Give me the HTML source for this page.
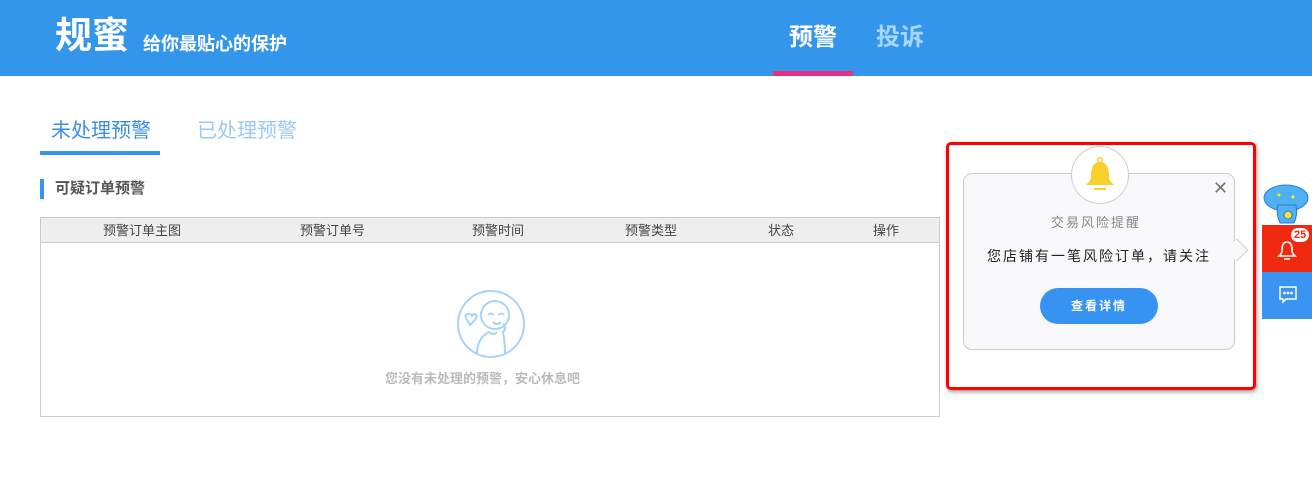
<!DOCTYPE html>
<html><head><meta charset="utf-8"><style>
*{margin:0;padding:0;box-sizing:border-box}
body{width:1312px;height:502px;background:#fff;font-family:"Liberation Sans","Noto Sans CJK SC",sans-serif;position:relative;overflow:hidden}
.hd{position:absolute;left:0;top:0;width:1312px;height:76px;background:#3396ea}
.abs{position:absolute;white-space:nowrap}
</style></head><body>
<div class="hd"></div>
<div class="abs" style="left:55px;top:11px;font-size:37px;color:#fff;font-weight:bold;line-height:50px">规蜜</div>
<div class="abs" style="left:143px;top:32px;font-size:18px;color:#fff;font-weight:bold;line-height:24px">给你最贴心的保护</div>
<div class="abs" style="left:789px;top:23px;font-size:24px;color:#fff;font-weight:bold;line-height:30px">预警</div>
<div class="abs" style="left:876px;top:23px;font-size:24px;color:#a8d6ff;font-weight:bold;line-height:30px">投诉</div>
<div class="abs" style="left:773px;top:71px;width:80px;height:5px;background:#ea2f7f"></div>

<div class="abs" style="left:51px;top:118px;font-size:20px;color:#3a8ee6;line-height:26px">未处理预警</div>
<div class="abs" style="left:197px;top:118px;font-size:20px;color:#9cc9f3;line-height:26px">已处理预警</div>
<div class="abs" style="left:40px;top:151px;width:120px;height:4px;background:#3396ea"></div>
<div class="abs" style="left:40px;top:179px;width:4px;height:20px;background:#3396ea"></div>
<div class="abs" style="left:55px;top:179px;font-size:15px;color:#555;font-weight:bold;line-height:20px">可疑订单预警</div>

<div class="abs" style="left:40px;top:217px;width:900px;height:200px;border:1px solid #ccc"></div>
<div class="abs" style="left:41px;top:218px;width:898px;height:25px;background:#eee;border-bottom:1px solid #ccc"></div>
<div class="abs" style="top:222px;font-size:13px;color:#444;line-height:17px;left:103px">预警订单主图</div>
<div class="abs" style="top:222px;font-size:13px;color:#444;line-height:17px;left:300px">预警订单号</div>
<div class="abs" style="top:222px;font-size:13px;color:#444;line-height:17px;left:472px">预警时间</div>
<div class="abs" style="top:222px;font-size:13px;color:#444;line-height:17px;left:625px">预警类型</div>
<div class="abs" style="top:222px;font-size:13px;color:#444;line-height:17px;left:768px">状态</div>
<div class="abs" style="top:222px;font-size:13px;color:#444;line-height:17px;left:873px">操作</div>
<svg class="abs" style="left:455px;top:288px" width="72" height="72" viewBox="0 0 72 72" fill="none" stroke="#a7d3fb" stroke-width="2">
<circle cx="36" cy="36" r="33"/>
<circle cx="40" cy="27" r="14"/>
<path d="M33 27q3-3 6 0M43 27q3-3 6 0M38 34q4 4 8 0"/>
<path d="M22 66q0-16 12-22 4 4 8 0M50 66q0-12 -2-22q4-4 0-8"/>
<path d="M12 32q-4-6 2-6 2 0 3 2 1-2 3-2 4 2-2 8l-3 3z"/>
</svg>
<div class="abs" style="left:385px;top:370px;font-size:13px;color:#bbb;font-weight:bold;line-height:18px">您没有未处理的预警，安心休息吧</div>

<div class="abs" style="left:946px;top:142px;width:310px;height:248px;border:3px solid #f00;border-radius:5px;box-shadow:1px 2px 4px rgba(0,0,0,.4)"></div>
<div class="abs" style="left:963px;top:173px;width:272px;height:177px;background:#f8f8fa;border:1px solid #ccc;border-radius:9px"></div>
<div class="abs" style="left:1229px;top:242px;width:16px;height:16px;background:#f8f8fa;border-right:1px solid #ccc;border-top:1px solid #ccc;transform:rotate(45deg)"></div>
<div class="abs" style="left:1071px;top:146px;width:58px;height:58px;border-radius:50%;background:#fff;border:1px solid #ccc"></div>
<svg class="abs" style="left:1084px;top:156px" width="32" height="38" viewBox="0 0 32 38"><circle cx="16" cy="4" r="2.5" fill="none" stroke="#f9cf2b" stroke-width="1.5"/><path d="M16 6c-7 0-9 6-9 14 0 4-2 6-5 9h28c-3-3-5-5-5-9 0-8-2-14-9-14z" fill="#f9cf2b"/><rect x="10" y="32" width="12" height="2" fill="#f9cf2b"/></svg>
<div class="abs" style="left:1213px;top:178px;font-size:18px;color:#777;line-height:20px">✕</div>
<div class="abs" style="left:1051px;top:214px;font-size:13px;color:#888;letter-spacing:2px;line-height:18px">交易风险提醒</div>
<div class="abs" style="left:987px;top:246px;font-size:14px;color:#222;letter-spacing:2px;line-height:20px">您店铺有一笔风险订单，请关注</div>
<div class="abs" style="left:1040px;top:288px;width:118px;height:36px;border-radius:18px;background:#3693f1;color:#fff;font-size:12px;font-weight:bold;text-align:center;line-height:36px;letter-spacing:2px">查看详情</div>

<svg class="abs" style="left:1262px;top:183px" width="50" height="43" viewBox="0 0 50 43"><ellipse cx="24" cy="15" rx="22" ry="13" fill="#4fb0f3" stroke="#2a7fd0"/><path d="M16 22q-2 10 2 18h14q4-8 2-18z" fill="#4fb0f3" stroke="#2a7fd0"/><circle cx="26" cy="32" r="4" fill="#f5e02a" stroke="#2a7fd0"/><circle cx="17" cy="12" r="1.5" fill="#ff0"/><circle cx="31" cy="14" r="1.5" fill="#ff0"/></svg>
<div class="abs" style="left:1262px;top:225px;width:50px;height:47px;background:#ef2a10"></div>
<svg class="abs" style="left:1277px;top:239px" width="20" height="22" viewBox="0 0 20 22" fill="none" stroke="#fff" stroke-width="1.6"><path d="M10 3c-4 0-5 4-5 8 0 3-1 4-3 6h16c-2-2-3-3-3-6 0-4-1-8-5-8zM7 20h6"/></svg>
<div class="abs" style="left:1291px;top:228px;height:14px;padding:0 3px;border-radius:7px;background:#fff;color:#ef2a10;font-size:11px;font-weight:bold;line-height:14px">25</div>
<div class="abs" style="left:1262px;top:272px;width:50px;height:47px;background:#3a95f2"></div>
<svg class="abs" style="left:1278px;top:285px" width="20" height="20" viewBox="0 0 20 20" fill="none" stroke="#fff" stroke-width="1.5"><path d="M2 2h16v12H8l-3 3v-3H2z"/><circle cx="6.5" cy="8" r=".6" fill="#fff"/><circle cx="10" cy="8" r=".6" fill="#fff"/><circle cx="13.5" cy="8" r=".6" fill="#fff"/></svg>
</body></html>
